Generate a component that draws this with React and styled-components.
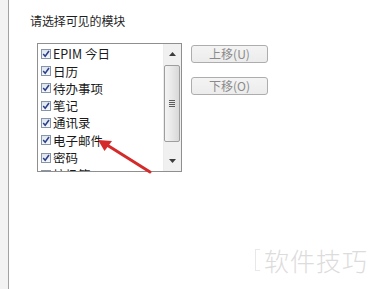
import React from "react";
import styled, { createGlobalStyle } from "styled-components";

const Global = createGlobalStyle`
  html, body { margin: 0; padding: 0; background: #ffffff; }
  body { font-family: "Noto Sans CJK SC", "Noto Sans", sans-serif; overflow: hidden; }
`;

const Page = styled.div`
  position: relative;
  display: flex;
  width: 375px;
  height: 289px;
  background: #ffffff;
  overflow: hidden;
`;

const Strip = styled.div`
  width: 8px;
  flex: none;
  background: #f3f3f3;
  border-right: 1px solid #a2a2a2;
`;

const Main = styled.div`
  flex: 1;
  padding: 14px 0 0 21px;
`;

const Title = styled.div`
  font-size: 12px;
  line-height: 14px;
  color: #1f1f1f;
  letter-spacing: -0.1px;
`;

const Row = styled.div`
  display: flex;
  align-items: flex-start;
  margin: 15px 0 0 7px;
`;

const ListBox = styled.div`
  display: flex;
  width: 145px;
  height: 129px;
  box-sizing: border-box;
  border: 1px solid #8f8f8f;
  background: #fff;
  overflow: hidden;
`;

const Items = styled.div`
  flex: 1;
  padding: 1px 0 0 3px;
  overflow: hidden;
`;

const Item = styled.div`
  display: flex;
  align-items: center;
  height: 17.33px;
  font-size: 12.5px;
  color: #1a1a1a;
  white-space: nowrap;
`;

const Check = styled.span`
  width: 10px;
  height: 10px;
  flex: none;
  box-sizing: border-box;
  border: 1px solid #8795a8;
  background: linear-gradient(#dfe5ee, #f6f8fa);
  margin-right: 2px;
  display: flex;
  align-items: center;
  justify-content: center;
`;

const Scroll = styled.div`
  width: 17px;
  flex: none;
  display: flex;
  flex-direction: column;
  background: #f0f0f0;
  border-left: 1px solid #ececec;
`;

const ArrowBtn = styled.div`
  height: 20px;
  display: flex;
  align-items: center;
  justify-content: center;
  flex: none;
`;

const Track = styled.div`
  flex: 1;
  padding: 1px 1px 0 0;
`;

const Thumb = styled.div`
  height: 77px;
  box-sizing: border-box;
  border: 1px solid #9e9e9e;
  border-radius: 2px;
  background: linear-gradient(90deg, #f4f4f4, #e6e6e6 55%, #d8d8d8);
  display: flex;
  flex-direction: column;
  align-items: center;
  justify-content: center;
  gap: 1px;
`;

const Grip = styled.span`
  width: 6px;
  height: 1px;
  background: #5c5c5c;
`;

const Buttons = styled.div`
  display: flex;
  flex-direction: column;
  gap: 14px;
  margin: 2px 0 0 9px;
`;

const Button = styled.div`
  width: 77px;
  height: 18px;
  box-sizing: border-box;
  border: 1px solid #adadad;
  border-radius: 3px;
  background: linear-gradient(#f4f4f4, #ececec);
  color: #8a8a8a;
  font-size: 12px;
  line-height: 16px;
  text-align: center;
`;

const Annotation = styled.svg`
  position: absolute;
  left: 0;
  top: 0;
  pointer-events: none;
`;

const Watermark = styled.div`
  position: absolute;
  left: 255px;
  top: 243px;
  display: flex;
  align-items: center;
  gap: 4px;
  color: #dcdcdc;
  font-size: 25px;
  font-weight: 300;
  line-height: 34px;
  letter-spacing: 1px;
`;

const Bracket = styled.span`
  width: 4px;
  height: 20px;
  border: 1px solid #e8e8e8;
  border-right: none;
`;

const items = ["EPIM 今日", "日历", "待办事项", "笔记", "通讯录", "电子邮件", "密码", "垃圾箱"];

const Tick = () => (
  <svg width="8" height="8" viewBox="0 0 8 8">
    <path d="M1.2 4 L3.2 6.3 L7 1" fill="none" stroke="#2a3f8c" strokeWidth="1.5" />
  </svg>
);

export default function App() {
  return (
    <>
      <Global />
      <Page>
        <Strip />
        <Main>
          <Title>请选择可见的模块</Title>
          <Row>
            <ListBox>
              <Items>
                {items.map((t) => (
                  <Item key={t}>
                    <Check>
                      <Tick />
                    </Check>
                    {t}
                  </Item>
                ))}
              </Items>
              <Scroll>
                <ArrowBtn>
                  <svg width="7" height="4" viewBox="0 0 7 4">
                    <path d="M0 4 L3.5 0 L7 4 Z" fill="#3c3c3c" />
                  </svg>
                </ArrowBtn>
                <Track>
                  <Thumb>
                    <Grip />
                    <Grip />
                    <Grip />
                    <Grip />
                  </Thumb>
                </Track>
                <ArrowBtn>
                  <svg width="7" height="4" viewBox="0 0 7 4">
                    <path d="M0 0 L7 0 L3.5 4 Z" fill="#3c3c3c" />
                  </svg>
                </ArrowBtn>
              </Scroll>
            </ListBox>
            <Buttons>
              <Button>上移(U)</Button>
              <Button>下移(O)</Button>
            </Buttons>
          </Row>
        </Main>
        <Annotation width="375" height="289" viewBox="0 0 375 289">
          <line x1="150" y1="172" x2="107" y2="145" stroke="#d42a2a" strokeWidth="3" strokeLinecap="round" />
          <path d="M98 140 L112 141 L104.5 151 Z" fill="#d42a2a" />
        </Annotation>
        <Watermark>
          <Bracket />
          软件技巧
        </Watermark>
      </Page>
    </>
  );
}
